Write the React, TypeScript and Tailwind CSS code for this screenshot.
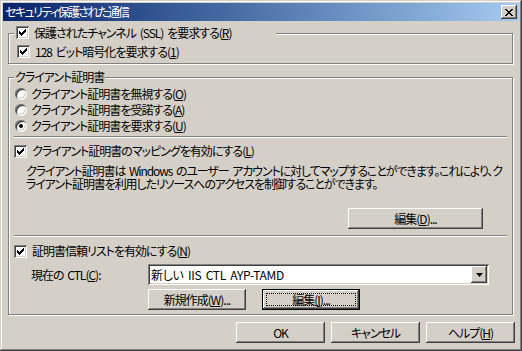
import type { ReactNode } from "react";

const raised =
  "bg-[#d4d0c8] shadow-[inset_-1px_-1px_#404040,inset_1px_1px_#ffffff,inset_-2px_-2px_#808080,inset_2px_2px_#d4d0c8]";
const sunken =
  "bg-white shadow-[inset_1px_1px_#808080,inset_-1px_-1px_#ffffff,inset_2px_2px_#404040,inset_-2px_-2px_#d4d0c8]";
const etched = "border border-[#808080] shadow-[inset_1px_1px_#ffffff,1px_1px_#ffffff]";

function Check() {
  // classic 7x7 tick, one 3px column per x
  const cols = [2, 3, 4, 3, 2, 1, 0];
  return (
    <span className={`${sunken} w-[13px] h-[13px] shrink-0 flex items-center justify-center`}>
      <svg width="7" height="7" viewBox="0 0 7 7" shapeRendering="crispEdges">
        {cols.map((y, x) => (
          <rect key={x} x={x} y={y} width="1" height="3" fill="#000" />
        ))}
      </svg>
    </span>
  );
}

function Radio({ on }: { on?: boolean }) {
  return (
    <span className={`${sunken} w-[12px] h-[12px] rounded-full shrink-0 flex items-center justify-center`}>
      {on && <span className="w-[4px] h-[4px] rounded-full bg-black" />}
    </span>
  );
}

function Btn({ children, w, def }: { children: ReactNode; w: string; def?: boolean }) {
  if (def) {
    return (
      <div className={`${w} h-[21px] border border-black`}>
        <div className={`${raised} w-full h-full p-[3px]`}>
          <div className="w-full h-full border border-dotted border-black flex items-center justify-center">
            {children}
          </div>
        </div>
      </div>
    );
  }
  return <div className={`${raised} ${w} h-[21px] flex items-center justify-center`}>{children}</div>;
}

function Sep() {
  return <div className="ml-[5px] w-[493px] h-[2px] border-t border-[#808080] border-b border-b-white" />;
}

export default function App() {
  const x = [
    [0, 0], [1, 0], [6, 0], [7, 0],
    [1, 1], [2, 1], [5, 1], [6, 1],
    [2, 2], [3, 2], [4, 2], [5, 2],
    [3, 3], [4, 3],
    [2, 4], [3, 4], [4, 4], [5, 4],
    [1, 5], [2, 5], [5, 5], [6, 5],
    [0, 6], [1, 6], [6, 6], [7, 6],
  ];
  return (
    <div className="w-[522px] h-[351px] bg-[#d4d0c8] p-[3px] overflow-hidden text-[12px] leading-[14px] tracking-[-1px] [word-spacing:2px] text-black font-['Noto_Sans_CJK_JP',sans-serif] [font-feature-settings:'palt'] shadow-[inset_-1px_-1px_#404040,inset_1px_1px_#d4d0c8,inset_-2px_-2px_#808080,inset_2px_2px_#ffffff]">
      {/* title bar */}
      <div className="h-[18px] flex items-center pl-[2px] pr-[2px] bg-gradient-to-r from-[#0a246a] to-[#a6caf0]">
        <span className="text-white tracking-[-1.6px]">セキュリティ保護された通信</span>
        <div className={`${raised} ml-auto w-[16px] h-[14px] flex items-center justify-center`}>
          <svg width="8" height="7" viewBox="0 0 8 7" shapeRendering="crispEdges">
            {x.map(([a, b], i) => (
              <rect key={i} x={a} y={b} width="1" height="1" fill="#000" />
            ))}
          </svg>
        </div>
      </div>

      <div className="px-[5px]">
        {/* SSL group */}
        <div className={`${etched} relative mt-[12px] w-[505px] h-[31px] pl-[8px] pt-[11px]`}>
          <div className="absolute left-[5px] top-[-8px] w-[262px] pl-[2px] bg-[#d4d0c8] flex items-center gap-[5px] h-[13px]">
            <Check />
            <span>
              保護されたチャンネル (SSL) を要求する(<u>R</u>)
            </span>
          </div>
          <div className="flex items-center gap-[5px] h-[13px]">
            <Check />
            <span>
              128 ビット暗号化を要求する(<u>1</u>)
            </span>
          </div>
        </div>

        {/* client certificates group */}
        <div className={`${etched} relative mt-[13px] w-[505px] h-[238px] pt-[8px]`}>
          <div className="absolute left-[5px] top-[-8px] px-[1px] bg-[#d4d0c8]">クライアント証明書</div>

          <div className="pl-[6px]">
            <div className="h-[16px] flex items-center gap-[4px]">
              <Radio />
              <span>
                クライアント証明書を無視する(<u>O</u>)
              </span>
            </div>
            <div className="h-[16px] flex items-center gap-[4px]">
              <Radio />
              <span>
                クライアント証明書を受諾する(<u>A</u>)
              </span>
            </div>
            <div className="h-[16px] flex items-center gap-[4px]">
              <Radio on />
              <span>
                クライアント証明書を要求する(<u>U</u>)
              </span>
            </div>
          </div>

          <div className="mt-[2px]">
            <Sep />
          </div>

          <div className="mt-[6px] ml-[5px] h-[14px] flex items-center gap-[5px]">
            <Check />
            <span>
              クライアント証明書のマッピングを有効にする(<u>L</u>)
            </span>
          </div>

          <p className="mt-[6px] ml-[17px] leading-[13px] tracking-[-1.1px] whitespace-nowrap">
            クライアント証明書は Windows のユーザー アカウントに対してマップすることができます。これにより、ク
            <br />
            ライアント証明書を利用したリソースへのアクセスを制御することができます。
          </p>

          <div className="mt-[18px] ml-[339px]">
            <Btn w="w-[135px]">
              編集(<u>D</u>)...
            </Btn>
          </div>

          <div className="mt-[6px]">
            <Sep />
          </div>

          <div className="mt-[7px] ml-[5px] h-[14px] flex items-center gap-[5px]">
            <Check />
            <span>
              証明書信頼リストを有効にする(<u>N</u>)
            </span>
          </div>

          <div className="mt-[6px] ml-[22px] flex items-center h-[21px]">
            <span className="w-[117px]">
              現在の CTL(<u>C</u>):
            </span>
            <div className={`${sunken} w-[341px] h-[21px] flex items-center pl-[3px] pr-[2px]`}>
              <span className="tracking-[-0.3px]">新しい IIS CTL AYP-TAMD</span>
              <div className={`${raised} ml-auto w-[16px] h-[17px] flex items-center justify-center`}>
                <svg width="7" height="4" viewBox="0 0 7 4">
                  <path d="M0 0H7L3.5 4Z" fill="#000" />
                </svg>
              </div>
            </div>
          </div>

          <div className="mt-[4px] ml-[139px] flex gap-[16px]">
            <Btn w="w-[98px]">
              新規作成(<u>W</u>)...
            </Btn>
            <Btn w="w-[98px]" def>
              編集(<u>I</u>)...
            </Btn>
          </div>
        </div>

        {/* dialog buttons */}
        <div className="mt-[7px] mr-[-1px] flex justify-end gap-[6px]">
          <Btn w="w-[89px]">OK</Btn>
          <Btn w="w-[89px]">キャンセル</Btn>
          <Btn w="w-[89px]">
            ヘルプ(<u>H</u>)
          </Btn>
        </div>
      </div>
    </div>
  );
}
